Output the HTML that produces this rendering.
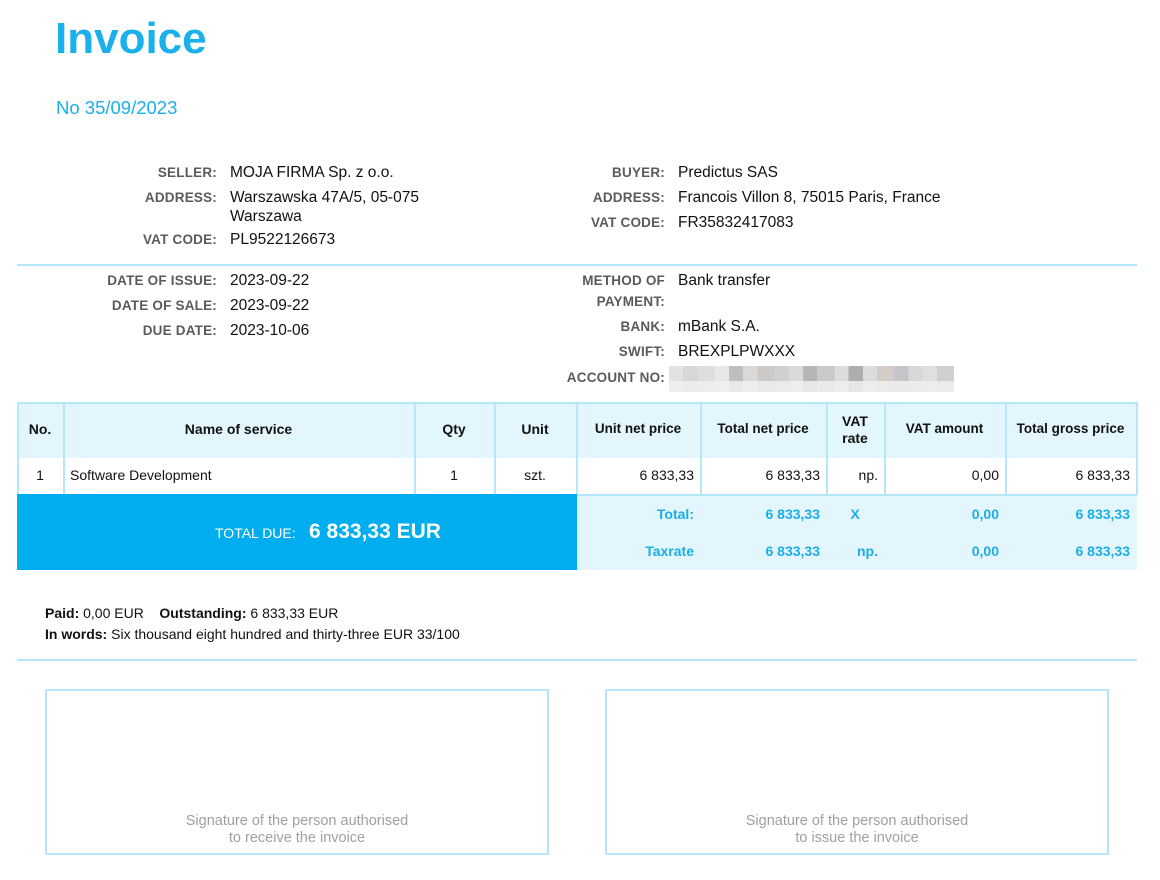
<!DOCTYPE html>
<html><head><meta charset="utf-8"><style>
*{margin:0;padding:0;box-sizing:border-box}
body{width:1160px;height:880px;background:#fff;font-family:"Liberation Sans",sans-serif;position:relative;overflow:hidden;color:#111}
.a{position:absolute;white-space:nowrap}
.l{position:absolute;font-weight:bold;font-size:13.5px;color:#5a5a5a;text-align:right;letter-spacing:.2px}
.v{position:absolute;font-size:15.5px;color:#111;white-space:nowrap}
.hr{position:absolute;left:17px;width:1120px;height:2px;background:#b3e7f9}
.c{position:absolute;font-size:14px;white-space:nowrap}
.vl{position:absolute;width:2px;background:#b3e7f9}
.bl{color:#1aaee8;font-weight:bold}
.sig{position:absolute;top:689px;width:504px;height:166px;border:2px solid #b3e7f9;color:#a0a0a0;font-size:14.5px;text-align:center;padding-top:122px;line-height:17px}
.px{position:absolute;height:15px;width:15px}
</style></head><body>
<div class="a" style="left:55px;top:14px;font-size:44px;font-weight:bold;color:#1ab0ec">Invoice</div>
<div class="a" style="left:56px;top:97px;font-size:18.5px;color:#1ab0ec">No 35/09/2023</div>

<div class="l" style="left:60px;width:157px;top:165px">SELLER:</div>
<div class="v" style="left:230px;top:164px">MOJA FIRMA Sp. z o.o.</div>
<div class="l" style="left:60px;width:157px;top:190px">ADDRESS:</div>
<div class="v" style="left:230px;top:189px">Warszawska 47A/5, 05-075</div>
<div class="v" style="left:230px;top:208px">Warszawa</div>
<div class="l" style="left:60px;width:157px;top:232px">VAT CODE:</div>
<div class="v" style="left:230px;top:231px">PL9522126673</div>

<div class="l" style="left:500px;width:165px;top:165px">BUYER:</div>
<div class="v" style="left:678px;top:164px">Predictus SAS</div>
<div class="l" style="left:500px;width:165px;top:190px">ADDRESS:</div>
<div class="v" style="left:678px;top:189px">Francois Villon 8, 75015 Paris, France</div>
<div class="l" style="left:500px;width:165px;top:215px">VAT CODE:</div>
<div class="v" style="left:678px;top:214px">FR35832417083</div>

<div class="hr" style="top:264px"></div>

<div class="l" style="left:40px;width:177px;top:273px">DATE OF ISSUE:</div>
<div class="v" style="left:230px;top:272px">2023-09-22</div>
<div class="l" style="left:40px;width:177px;top:298px">DATE OF SALE:</div>
<div class="v" style="left:230px;top:297px">2023-09-22</div>
<div class="l" style="left:40px;width:177px;top:323px">DUE DATE:</div>
<div class="v" style="left:230px;top:322px">2023-10-06</div>

<div class="l" style="left:500px;width:165px;top:273px">METHOD OF</div>
<div class="l" style="left:500px;width:165px;top:294px">PAYMENT:</div>
<div class="v" style="left:678px;top:272px">Bank transfer</div>
<div class="l" style="left:500px;width:165px;top:319px">BANK:</div>
<div class="v" style="left:678px;top:318px">mBank S.A.</div>
<div class="l" style="left:500px;width:165px;top:344px">SWIFT:</div>
<div class="v" style="left:678px;top:343px">BREXPLPWXXX</div>
<div class="l" style="left:500px;width:165px;top:370px">ACCOUNT NO:</div>
<div style="position:absolute;left:669px;top:366px;width:285px;height:26px;background:linear-gradient(90deg,#e2e2e2 0 5%,#d7d7d7 5% 10%,#dedede 10% 16%,#e8e8e8 16% 21%,#bebebe 21% 26%,#d9d9d9 26% 31%,#cfc9c6 31% 37%,#d0d0d0 37% 42%,#dadada 42% 47%,#b6b6b6 47% 52%,#c9c9c9 52% 58%,#dcdcdc 58% 63%,#aeaeae 63% 68%,#dcdcdc 68% 73%,#d3ccc8 73% 79%,#c3c5c8 79% 84%,#d8d8d8 84% 89%,#dfdfdf 89% 94%,#d0d0d0 94%)"></div>
<div style="position:absolute;left:669px;top:381px;width:285px;height:11px;background:#f0f0f0;opacity:.85"></div>

<!-- table -->
<div style="position:absolute;left:17px;top:402px;width:1120px;height:56px;background:#e4f6fd;border-top:2px solid #b3e7f9"></div>
<div style="position:absolute;left:17px;top:494px;width:1120px;height:76px;background:#e4f6fd;border-top:2px solid #b3e7f9"></div>
<div style="position:absolute;left:17px;top:494px;width:560px;height:76px;background:#00aeef"></div>
<div class="vl" style="left:17px;top:402px;height:92px"></div>
<div class="vl" style="left:63px;top:402px;height:92px"></div>
<div class="vl" style="left:414px;top:402px;height:92px"></div>
<div class="vl" style="left:494px;top:402px;height:92px"></div>
<div class="vl" style="left:576px;top:402px;height:92px"></div>
<div class="vl" style="left:700px;top:402px;height:92px"></div>
<div class="vl" style="left:826px;top:402px;height:92px"></div>
<div class="vl" style="left:884px;top:402px;height:92px"></div>
<div class="vl" style="left:1005px;top:402px;height:92px"></div>
<div class="vl" style="left:1136px;top:402px;height:92px"></div>

<div class="c" style="left:17px;width:46px;top:421px;text-align:center;font-weight:bold">No.</div>
<div class="c" style="left:63px;width:351px;top:421px;text-align:center;font-weight:bold">Name of service</div>
<div class="c" style="left:414px;width:80px;top:421px;text-align:center;font-weight:bold">Qty</div>
<div class="c" style="left:494px;width:82px;top:421px;text-align:center;font-weight:bold">Unit</div>
<div class="c" style="left:576px;width:124px;top:421px;text-align:center;font-weight:bold;font-size:13.5px">Unit net price</div>
<div class="c" style="left:700px;width:126px;top:421px;text-align:center;font-weight:bold;font-size:13.5px">Total net price</div>
<div class="c" style="left:826px;width:58px;top:413px;text-align:center;font-weight:bold;line-height:17px">VAT<br>rate</div>
<div class="c" style="left:884px;width:121px;top:421px;text-align:center;font-weight:bold;font-size:13.5px">VAT amount</div>
<div class="c" style="left:1005px;width:131px;top:421px;text-align:center;font-weight:bold;font-size:13.5px">Total gross price</div>

<div class="c" style="left:17px;width:46px;top:467px;text-align:center">1</div>
<div class="c" style="left:70px;top:467px">Software Development</div>
<div class="c" style="left:414px;width:80px;top:467px;text-align:center">1</div>
<div class="c" style="left:494px;width:82px;top:467px;text-align:center">szt.</div>
<div class="c" style="left:576px;width:118px;top:467px;text-align:right">6 833,33</div>
<div class="c" style="left:700px;width:120px;top:467px;text-align:right">6 833,33</div>
<div class="c" style="left:826px;width:52px;top:467px;text-align:right">np.</div>
<div class="c" style="left:884px;width:115px;top:467px;text-align:right">0,00</div>
<div class="c" style="left:1005px;width:125px;top:467px;text-align:right">6 833,33</div>

<div class="a" style="left:215px;top:525px;font-size:14px;color:#fff">TOTAL DUE:</div>
<div class="a" style="left:309px;top:520px;font-size:21px;color:#fff;font-weight:bold">6 833,33 EUR</div>

<div class="c bl" style="left:576px;width:118px;top:506px;text-align:right">Total:</div>
<div class="c bl" style="left:700px;width:120px;top:506px;text-align:right">6 833,33</div>
<div class="c bl" style="left:826px;width:58px;top:506px;text-align:center">X</div>
<div class="c bl" style="left:884px;width:115px;top:506px;text-align:right">0,00</div>
<div class="c bl" style="left:1005px;width:125px;top:506px;text-align:right">6 833,33</div>
<div class="c bl" style="left:576px;width:118px;top:543px;text-align:right">Taxrate</div>
<div class="c bl" style="left:700px;width:120px;top:543px;text-align:right">6 833,33</div>
<div class="c bl" style="left:826px;width:52px;top:543px;text-align:right">np.</div>
<div class="c bl" style="left:884px;width:115px;top:543px;text-align:right">0,00</div>
<div class="c bl" style="left:1005px;width:125px;top:543px;text-align:right">6 833,33</div>

<div class="a" style="left:45px;top:605px;font-size:14px"><b>Paid:</b> 0,00 EUR &nbsp;&nbsp;&nbsp;<b>Outstanding:</b> 6 833,33 EUR</div>
<div class="a" style="left:45px;top:626px;font-size:14px"><b>In words:</b> Six thousand eight hundred and thirty-three EUR 33/100</div>

<div class="hr" style="top:659px"></div>

<div class="sig" style="left:45px">Signature of the person authorised<br>to receive the invoice</div>
<div class="sig" style="left:605px">Signature of the person authorised<br>to issue the invoice</div>
</body></html>
